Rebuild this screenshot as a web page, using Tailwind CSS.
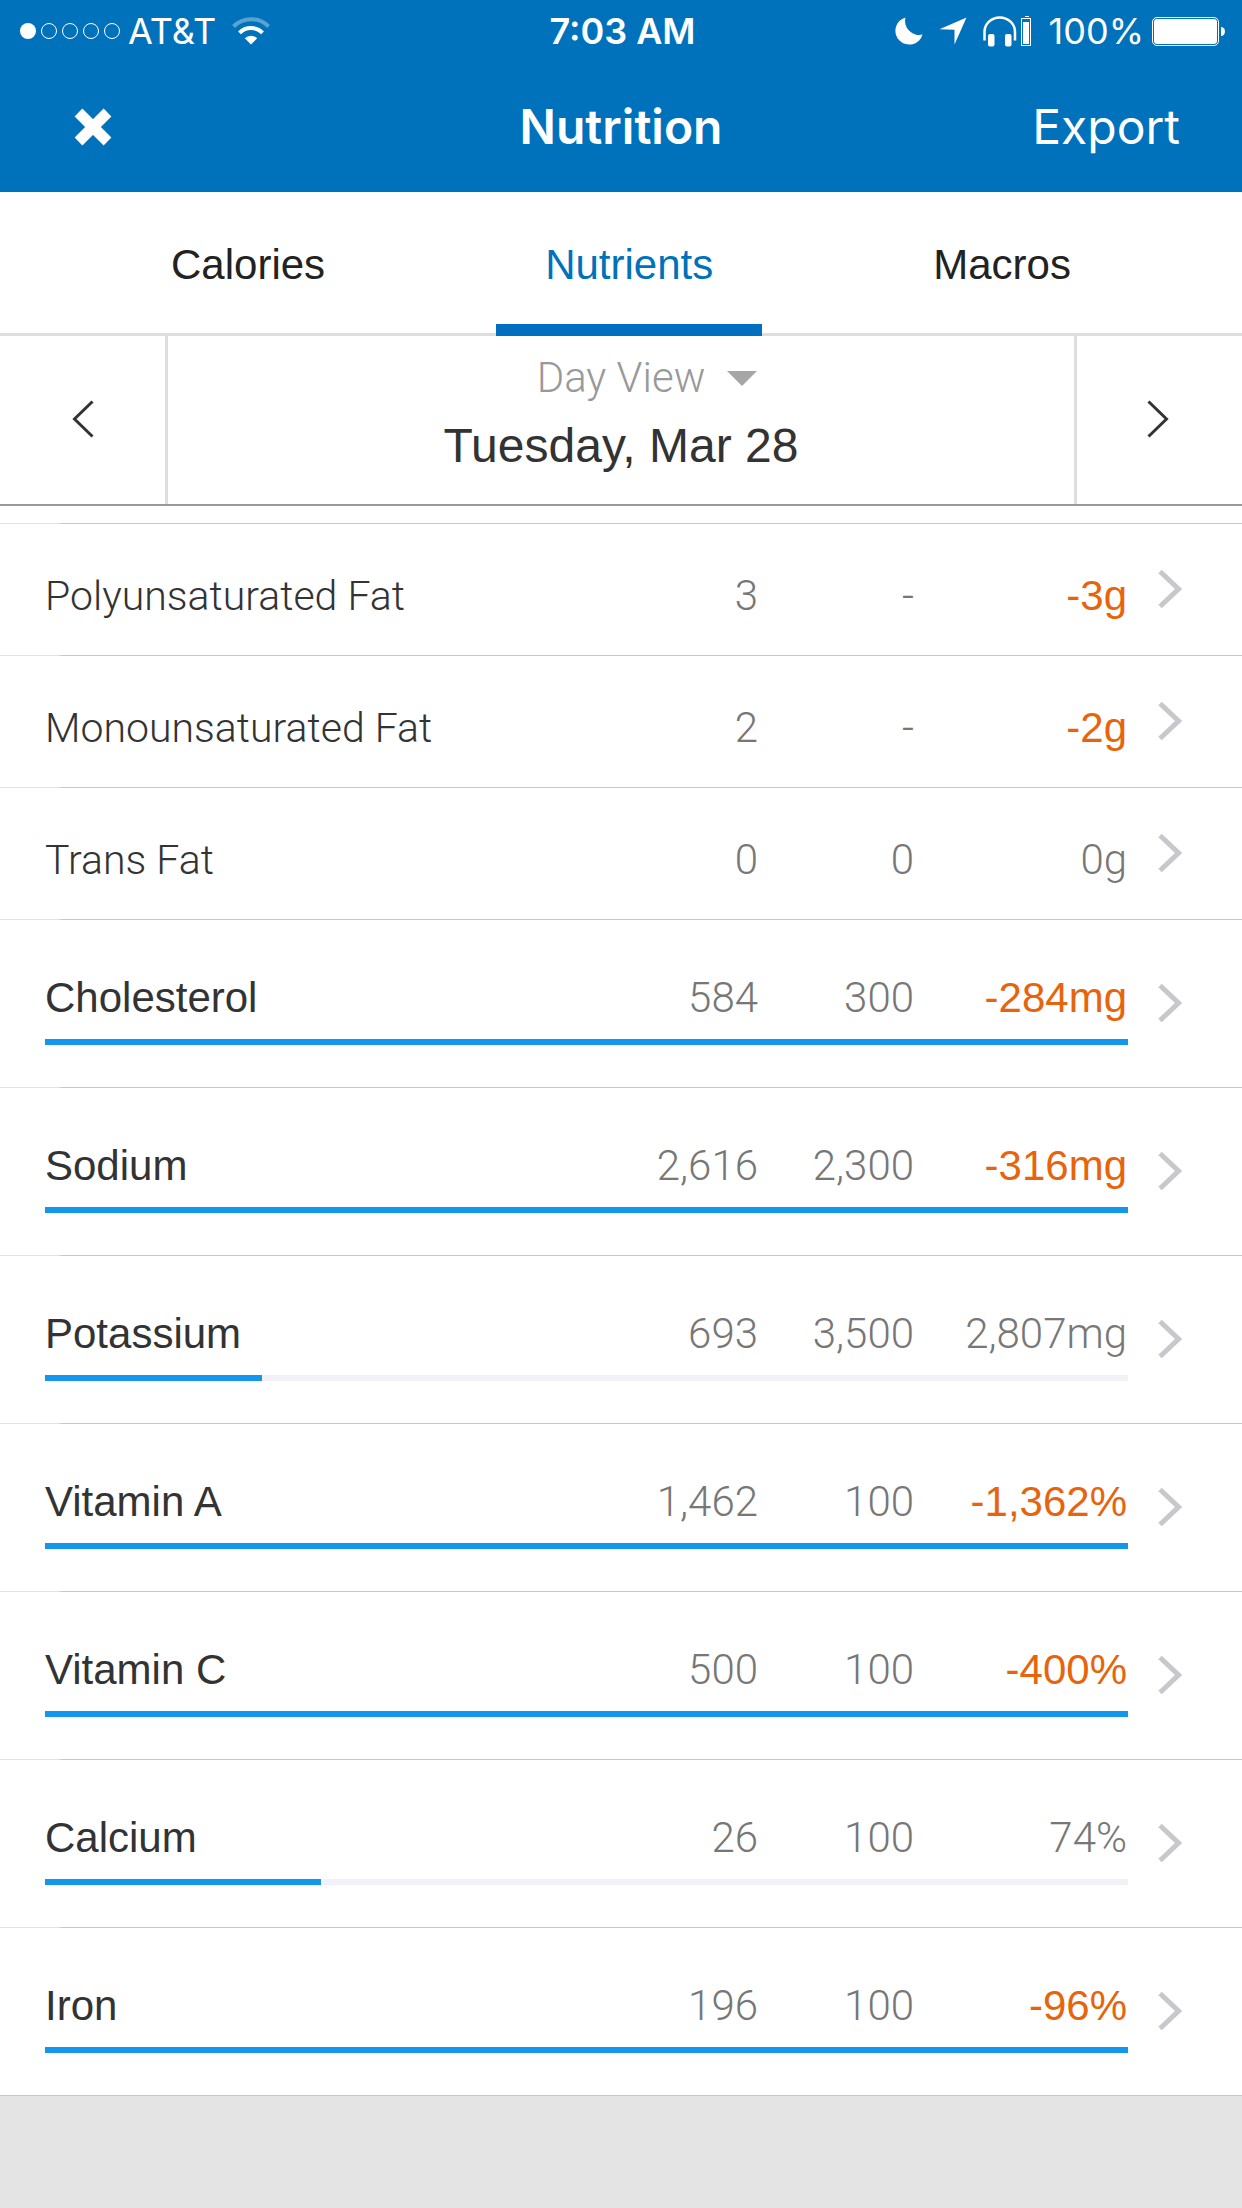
<!DOCTYPE html>
<html lang="en">
<head>
  <meta charset="UTF-8">
  <title>Nutrition</title>
  <meta name="viewport" content="width=device-width, initial-scale=1">
  <script src="https://cdn.jsdelivr.net/npm/@tailwindcss/browser@4"></script>
</head>

<body class="min-h-screen bg-[#e4e4e4] font-['Liberation_Sans',sans-serif] text-[#333]">
  <!-- HEADER -->
  <header class="bg-[#0072bc] text-white font-[Inter,sans-serif]">
    <!-- Status bar -->
    <div class="grid grid-cols-[1fr_auto_1fr] items-center h-[62px] pl-5 pr-[17px] text-[36px] leading-[44px]">
      <div class="flex items-center">
        <svg class="w-[100px] h-4" viewBox="0 0 100 16" fill="none" stroke="#fff">
          <circle cx="8" cy="8" r="8" fill="#fff" stroke="none"/>
          <circle cx="29" cy="8" r="7.5"/>
          <circle cx="50" cy="8" r="7.5"/>
          <circle cx="71" cy="8" r="7.5"/>
          <circle cx="92" cy="8" r="7.5"/>
        </svg>
        <span class="ml-2">AT&amp;T</span>
        <svg class="ml-4 w-[38px] h-7" viewBox="0 0 38 28" fill="none" stroke="#fff" stroke-width="4">
          <path d="M1.500 9.500A24.500 24.500 0 0 1 36.500 9.500" opacity=".35"/>
          <path d="M7.500 15.800A16 16 0 0 1 30.500 15.800"/>
          <path d="M19 27.500l-6.200-6.300a8.800 8.800 0 0 1 12.400 0z" fill="#fff" stroke="none"/>
        </svg>
      </div>
      <div class="font-semibold">7:03 AM</div>
      <div class="flex items-center justify-end">
        <svg class="w-7 h-7" viewBox="0 0 28 28" fill="#fff">
          <path d="M10.500 0.500A13.800 13.800 0 1 0 27.500 17.500A14 14 0 0 1 10.500 0.500z"/>
        </svg>
        <svg class="ml-4 w-7 h-7" viewBox="0 0 28 28" fill="#fff">
          <path d="M27.500 0.500L15.500 27.500V12.800L0.500 12.300z"/>
        </svg>
        <svg class="ml-4 w-[50px] h-[31px]" viewBox="0 0 50 31">
          <path d="M1.500 24.500V16A15.200 14.500 0 0 1 32 16V24.500" fill="none" stroke="#fff" stroke-width="2.500"/>
          <rect x="5" y="18" width="6.500" height="12.500" rx="2" fill="#fff"/>
          <rect x="22" y="18" width="6.500" height="12.500" rx="2" fill="#fff"/>
          <path d="M42 .5h4" stroke="#fff"/>
          <rect x="38.500" y="2.500" width="9" height="27" fill="none" stroke="#fff"/>
          <rect x="40" y="6" width="6" height="22" fill="#fff"/>
        </svg>
        <span class="ml-4">100%</span>
        <svg class="ml-2 w-[73px] h-[29px]" viewBox="0 0 73 29">
          <rect x=".5" y=".5" width="66" height="28" rx="4.500" fill="none" stroke="#fff"/>
          <rect x="2" y="2" width="63" height="25" rx="3" fill="#fff"/>
          <path d="M69 10a4 4.500 0 0 1 4 4.500a4 4.500 0 0 1-4 4.500z" fill="#fff"/>
        </svg>
      </div>
    </div>

    <!-- Nav bar -->
    <div class="grid grid-cols-[1fr_auto_1fr] items-center h-[130px] px-[62px] text-[48px] leading-[60px]">
      <button type="button" aria-label="Close" class="justify-self-start px-3">
        <svg class="w-[38px] h-[38px]" viewBox="0 0 38 38" stroke="#fff" stroke-width="11">
          <path d="M4.500 4.500l29 29M33.500 4.500l-29 29"/>
        </svg>
      </button>
      <h1 class="font-semibold">Nutrition</h1>
      <button type="button" class="justify-self-end">Export</button>
    </div>
  </header>

  <!-- TABS -->
  <nav class="flex justify-evenly bg-white border-b-3 border-[#dedede] text-[42px] leading-[50px] text-[#222]">
    <a href="#calories" class="px-[49px] pt-12 pb-[43px]">Calories</a>
    <a href="#nutrients" aria-current="page" class="-mb-[3px] px-[49px] pt-12 pb-8 border-b-12 border-[#006fc0] text-[#0072bc]">Nutrients</a>
    <a href="#macros" class="px-[49px] pt-12 pb-[43px]">Macros</a>
  </nav>

  <!-- DATE PICKER -->
  <section class="grid grid-cols-[168px_1fr_168px] h-[170px] bg-white border-b-2 border-[#999]">
    <button type="button" aria-label="Previous day" class="flex items-center justify-center pb-[3px] border-r-3 border-[#dedede]">
      <svg class="w-[22px] h-[38px]" viewBox="0 0 22 38" fill="none" stroke="#333" stroke-width="3">
        <path d="M20.500 1.500L2.500 19l18 17.500"/>
      </svg>
    </button>
    <div class="flex flex-col items-center pt-[17px]">
      <div class="grid grid-cols-[1fr_auto_1fr] items-center w-full">
        <select id="view" aria-label="View" class="col-start-2 appearance-none field-sizing-content font-[Roboto,sans-serif] font-light text-[42px] leading-[50px] text-[#999]">
          <option>Day View</option>
          <option>Week View</option>
        </select>
        <svg class="ml-[22px] w-[30px] h-[15px]" viewBox="0 0 30 15" fill="#a6a6a6">
          <path d="M0 0h30L15 15z"/>
        </svg>
      </div>
      <h2 class="mt-[15px] text-[48px] leading-[56px]">Tuesday, Mar 28</h2>
    </div>
    <button type="button" aria-label="Next day" class="flex items-center justify-center pb-[3px] pr-[3px] border-l-3 border-[#dedede]">
      <svg class="w-[22px] h-[38px]" viewBox="0 0 22 38" fill="none" stroke="#333" stroke-width="3">
        <path d="M1.500 1.500l18 17.500L1.500 36.500"/>
      </svg>
    </button>
  </section>

  <!-- NUTRIENTS -->
  <main class="pt-[17px] bg-white border-b border-[#c8c7cc]">
    <table id="nutrients" class="w-full table-fixed border-collapse text-[42px] leading-[50px]">
      <colgroup>
        <col>
        <col class="w-[156px]">
        <col class="w-[156px]">
        <col class="w-[213px]">
        <col class="w-[114px]">
      </colgroup>
    </table>
  </main>

  <!-- SCRIPT -->
  <script>
    // bar: percent of the goal reached, left out for the sub-nutrients
    const nutrients = [
      { name: 'Polyunsaturated Fat', total: '3', goal: '-', left: '-3g' },
      { name: 'Monounsaturated Fat', total: '2', goal: '-', left: '-2g' },
      { name: 'Trans Fat', total: '0', goal: '0', left: '0g' },
      { name: 'Cholesterol', total: '584', goal: '300', left: '-284mg', bar: 100 },
      { name: 'Sodium', total: '2,616', goal: '2,300', left: '-316mg', bar: 100 },
      { name: 'Potassium', total: '693', goal: '3,500', left: '2,807mg', bar: 20 },
      { name: 'Vitamin A', total: '1,462', goal: '100', left: '-1,362%', bar: 100 },
      { name: 'Vitamin C', total: '500', goal: '100', left: '-400%', bar: 100 },
      { name: 'Calcium', total: '26', goal: '100', left: '74%', bar: 25.5 },
      { name: 'Iron', total: '196', goal: '100', left: '-96%', bar: 100 }
    ];

    const row = ({ name, total, goal, left, bar }) => {
      const hasBar = bar !== undefined;
      const pad = hasBar ? 'pt-[54px]' : 'pt-12';
      const light = "font-[Roboto,sans-serif] font-light";
      const nameFont = hasBar ? 'font-normal' : light + ' text-[41px]';
      const leftFont = left.startsWith('-') ? 'text-[#e8640c]' : light + ' text-[#777]';
      return `
        <tbody class="bg-[linear-gradient(to_right,#e2e2e2_60px,#c8c7cc_60px)] bg-size-[100%_1px] bg-no-repeat">
          <tr class="${hasBar ? 'h-[120px]' : 'h-[132px]'} align-baseline">
            <th scope="row" class="${pad} pl-[45px] text-left whitespace-nowrap ${nameFont}">${name}</th>
            <td class="${pad} pr-px text-right text-[#777] ${light}">${total}</td>
            <td class="${pad} pr-px text-right text-[#777] ${light}">${goal}</td>
            <td class="${pad} pr-px text-right whitespace-nowrap ${leftFont}">${left}</td>
            <td rowspan="${hasBar ? 2 : 1}" class="pl-[30px] align-middle">
              <a href="#" aria-label="${name}" class="block w-6">
                <svg class="block w-6 h-10" viewBox="0 0 24 40" fill="none" stroke="#c8c7cc" stroke-width="5">
                  <path d="M2 2.500L20.500 20L2 37.500"/>
                </svg>
              </a>
            </td>
          </tr>
          ${hasBar ? `
          <tr class="h-12 align-top">
            <td colspan="4" class="pl-[45px]">
              <div class="h-1.5 bg-[#f1f1f7]"><div class="h-full bg-[#1296ee]" style="width:${bar}%"></div></div>
            </td>
          </tr>` : ''}
        </tbody>`;
    };

    document.getElementById('nutrients').insertAdjacentHTML('beforeend', nutrients.map(row).join(''));
  </script>
</body>
</html>
